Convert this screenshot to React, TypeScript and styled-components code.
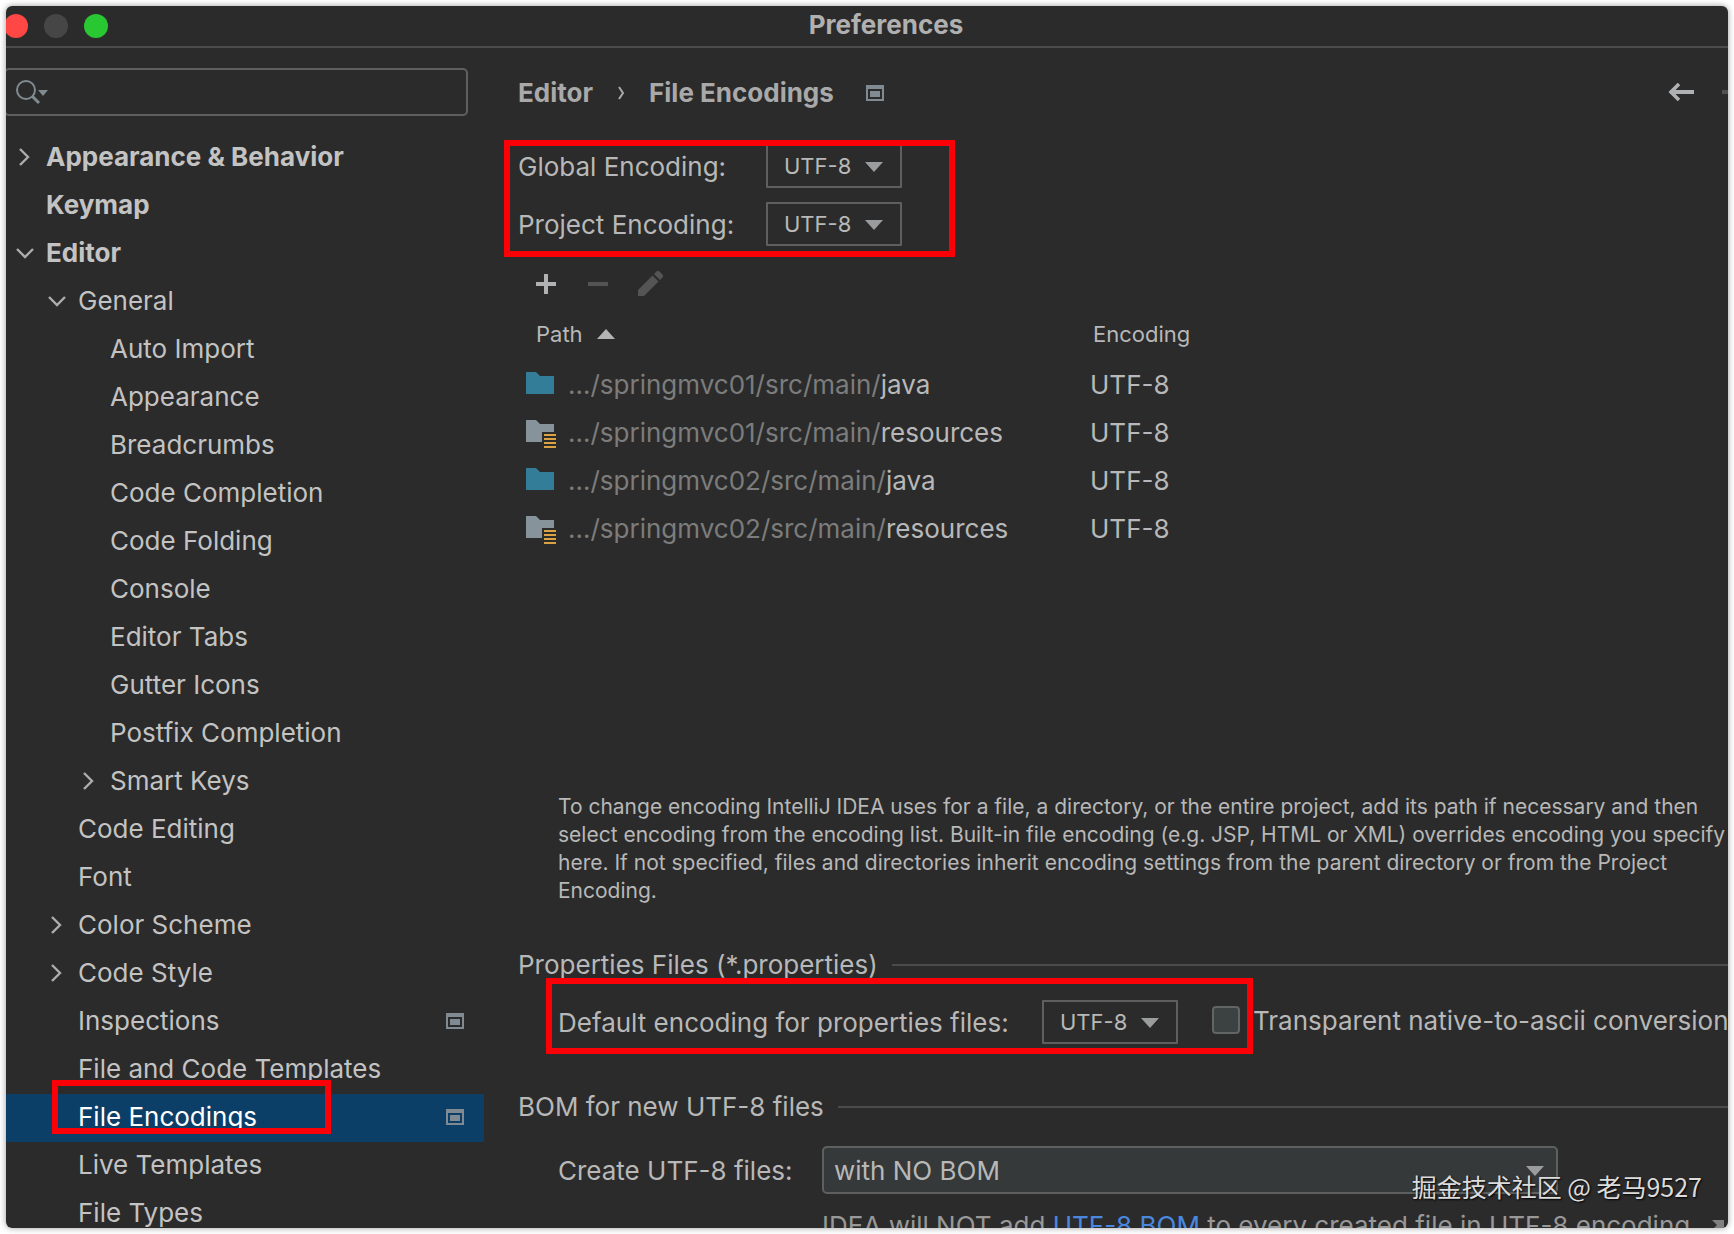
import React, { useState } from "react";
import styled, { createGlobalStyle, css } from "styled-components";

const color = {
  panel: "#2b2b2b",
  line: "#4b4b4b",
  border: "#5e6060",
  text: "#b8b8b8",
  tree: "#c3c3c3",
  muted: "#7c7c7c",
  disabled: "#545454",
  icon: "#afb1b3",
  selection: "#0b3f68",
  link: "#4a88e0",
  mark: "#fb0007",
};

const size = { body: 26, small: 22, help: 21 };

const GlobalStyle = createGlobalStyle`
  * { box-sizing: border-box; }
  body {
    margin: 0;
    background: #fff;
    color: ${color.text};
    font-family: Inter, "Liberation Sans", "Noto Sans CJK SC", sans-serif;
    font-size: ${size.body}px;
    line-height: 32px;
  }
  button, input, select { font: inherit; color: inherit; margin: 0; }
`;

const Backdrop = styled.div`
  height: 100vh;
  padding: 6px;
`;

const Window = styled.main`
  position: relative;
  display: flex;
  flex-direction: column;
  height: 100%;
  overflow: hidden;
  border-radius: 6px;
  background: ${color.panel};
`;

const Shadow = styled.div`
  height: 100%;
  border-radius: 6px;
  box-shadow: 0 0 6px rgba(0, 0, 0, 0.4);
`;

const TitleBar = styled.header`
  display: grid;
  grid-template-columns: 1fr auto 1fr;
  align-items: center;
  flex: none;
  height: 42px;
  border-bottom: 2px solid ${color.line};
`;

const Lights = styled.div`
  display: flex;
  gap: 16px;
  margin-left: -2px;
`;

const Light = styled.button<{ $fill: string }>`
  width: 24px;
  height: 24px;
  padding: 0;
  border: 0;
  border-radius: 50%;
  background: ${(p) => p.$fill};
`;

const WindowTitle = styled.h1`
  margin: 0;
  padding: 0 0 2px 38px;
  font-size: ${size.body}px;
  font-weight: 700;
  color: #b0b0b0;
`;

const Body = styled.div`
  display: grid;
  grid-template-columns: 478px minmax(0, 1fr);
  flex: 1;
  min-height: 0;
`;

const Sidebar = styled.aside`
  min-height: 0;
  padding-top: 20px;
`;

const SearchBox = styled.label`
  display: flex;
  align-items: center;
  height: 48px;
  margin: 0 16px 18px -2px;
  padding-left: 9px;
  border: 2px solid ${color.border};
  border-radius: 5px;
`;

const SearchInput = styled.input`
  flex: 1;
  min-width: 0;
  height: 40px;
  padding: 0 8px;
  border: 0;
  outline: 0;
  background: transparent;
`;

const TreeList = styled.ul`
  margin: 0;
  padding: 0;
  list-style: none;
`;

const TreeItem = styled.li`
  position: relative;
`;

const TreeRow = styled.button<{ $level: number; $selected: boolean }>`
  display: flex;
  align-items: center;
  gap: 9px;
  width: 100%;
  height: 48px;
  padding: 0 20px 3px ${(p) => 7 + p.$level * 32}px;
  border: 0;
  background: transparent;
  color: ${color.tree};
  text-align: left;
  white-space: nowrap;
  ${(p) =>
    p.$selected &&
    css`
      background: ${color.selection};
      color: #fff;
    `}
`;

const Slot = styled.span`
  display: flex;
  justify-content: center;
  flex: none;
  width: 24px;
`;

const TreeLabel = styled.span<{ $bold: boolean }>`
  flex: 1;
  font-weight: ${(p) => (p.$bold ? 700 : 400)};
`;

const Mark = styled.span<{ $top: number; $right: number; $bottom: number; $left: number }>`
  position: absolute;
  top: ${(p) => p.$top}px;
  right: ${(p) => p.$right}px;
  bottom: ${(p) => p.$bottom}px;
  left: ${(p) => p.$left}px;
  z-index: 1;
  border: 6px solid ${color.mark};
  pointer-events: none;
`;

const Content = styled.section`
  min-width: 0;
  padding-left: 34px;
  overflow: hidden;
  white-space: nowrap;
`;

const TopRow = styled.div`
  display: flex;
  align-items: center;
  height: 90px;
`;

const Crumbs = styled.nav`
  display: flex;
  align-items: center;
  gap: 24px;
  flex: 1;
  font-weight: 700;
  color: #a9a9a9;
`;

const ProjectMark = styled.span`
  display: flex;
  margin-left: 8px;
`;

const History = styled.div`
  display: flex;
  gap: 28px;
  margin-right: -20px;
`;

const IconButton = styled.button`
  display: flex;
  padding: 0;
  border: 0;
  background: transparent;
`;

const Encodings = styled.div`
  position: relative;
  display: grid;
  grid-template-columns: 248px 136px;
  row-gap: 14px;
  align-items: center;
  width: max-content;
  margin-top: 6px;
`;

const FieldLabel = styled.label`
  padding-top: 2px;
`;

const SelectWrap = styled.div<{ $wide?: boolean }>`
  position: relative;
  width: ${(p) => (p.$wide ? 736 : 136)}px;
  height: ${(p) => (p.$wide ? 48 : 44)}px;
`;

const Select = styled.select<{ $wide?: boolean }>`
  appearance: none;
  width: 100%;
  height: 100%;
  padding: ${(p) => (p.$wide ? "2px 10px 0" : "0 16px")};
  border: 2px solid ${color.border};
  border-radius: ${(p) => (p.$wide ? 5 : 1)}px;
  outline: 0;
  background: ${(p) => (p.$wide ? "#353939" : "transparent")};
  font-size: ${(p) => (p.$wide ? size.body : size.small)}px;
`;

const SelectArrow = styled.span<{ $wide?: boolean }>`
  position: absolute;
  top: 2px;
  bottom: 0;
  right: ${(p) => (p.$wide ? 14 : 19)}px;
  display: flex;
  align-items: center;
  pointer-events: none;
`;

const Toolbar = styled.div`
  display: flex;
  align-items: center;
  gap: 26px;
  height: 52px;
  margin-top: 12px;
  padding-left: 15px;
`;

const TablePanel = styled.div`
  min-height: 483px;
`;

const Table = styled.table`
  width: 100%;
  border-collapse: collapse;
  table-layout: fixed;
`;

const PathColumn = styled.col`
  width: 572px;
`;

const HeadCell = styled.th<{ $inset: number }>`
  height: 50px;
  padding: 0 0 2px ${(p) => p.$inset}px;
  font-size: ${size.small}px;
  font-weight: 400;
  text-align: left;
`;

const HeadInner = styled.span`
  display: flex;
  align-items: center;
  gap: 14px;
`;

const Cell = styled.td`
  height: 48px;
  padding: 2px 0 0;
`;

const PathInner = styled.span`
  display: flex;
  align-items: center;
  gap: 10px;
  padding-left: 8px;
`;

const Muted = styled.span`
  color: ${color.muted};
`;

const Help = styled.p`
  margin: 0;
  padding-left: 40px;
  font-size: ${size.help}px;
  line-height: 28px;
`;

const SectionTitle = styled.h2<{ $space: number }>`
  display: flex;
  align-items: center;
  gap: 14px;
  height: 32px;
  margin: ${(p) => p.$space}px 0 0;
  font-size: ${size.body}px;
  font-weight: 400;

  &::after {
    content: "";
    flex: 1;
    height: 2px;
    background: ${color.line};
  }
`;

const PropertiesRow = styled.div`
  display: flex;
  align-items: center;
  margin-top: 19px;
  padding-left: 40px;
`;

const MarkedFields = styled.div`
  position: relative;
  display: grid;
  grid-template-columns: 484px 136px 34px 28px;
  align-items: center;
`;

const Checkbox = styled.input`
  appearance: none;
  grid-column: 4;
  width: 28px;
  height: 28px;
  border: 2px solid #616566;
  border-radius: 4px;
  background: #3c4142;

  && {
    margin-bottom: 4px;
  }
`;

const CheckLabel = styled.label`
  padding: 0 0 2px 13px;
`;

const BomGrid = styled.div`
  display: grid;
  grid-template-columns: 264px max-content;
  row-gap: 16px;
  align-items: center;
  margin-top: 23px;
  padding-left: 40px;
`;

const Hint = styled.p`
  grid-column: 2;
  display: flex;
  align-items: center;
  gap: 18px;
  margin: 0;
  color: #989898;
`;

const Link = styled.a`
  color: ${color.link};
  text-decoration: none;
`;

const Watermark = styled.div`
  position: absolute;
  right: 26px;
  bottom: 26px;
  z-index: 2;
  color: #dcdcdc;
  font-family: "Noto Sans CJK SC", sans-serif;
  font-size: 25px;
  text-shadow: 1px 1px 2px #000;
`;

const Triangle = ({ up = false, fill = "#9a9c9d" }: { up?: boolean; fill?: string }) => (
  <svg width="18" height="10" viewBox="0 0 18 10" aria-hidden="true">
    <path d={up ? "M0 10h18L9 0z" : "M0 0h18L9 10z"} fill={fill} />
  </svg>
);

const Chevron = ({ open }: { open: boolean }) => (
  <svg width="18" height="18" viewBox="0 0 18 18" fill="none" stroke="#adadad" strokeWidth="2.4" aria-hidden="true">
    <path d={open ? "M1 5l8 8 8-8" : "M4 1l8 8-8 8"} />
  </svg>
);

const ProjectIcon = () => (
  <svg width="18" height="16" viewBox="0 0 18 16" fill="#808a92" aria-hidden="true">
    <path fillRule="evenodd" d="M0 0h18v16H0zM2 4v10h14V4z" />
    <path d="M4 6h10v6H4z" />
  </svg>
);

const SearchIcon = () => (
  <svg width="34" height="26" viewBox="0 0 34 26" fill="none" stroke="#7f8b91" strokeWidth="2" aria-hidden="true">
    <circle cx="11" cy="11" r="9" />
    <path d="M17 17l7 7" strokeWidth="3" />
    <path d="M23 11h10l-5 6z" fill="#7f8b91" stroke="none" />
  </svg>
);

const Arrow = ({ forward = false }: { forward?: boolean }) => (
  <svg width="26" height="20" viewBox="0 0 26 20" fill="none" stroke={forward ? "#515151" : "#afb1b3"} aria-hidden="true">
    <path d={forward ? "M0 9h24" : "M2 9h24"} strokeWidth="4" />
    <path d={forward ? "M15 1l8 8-8 8" : "M11 1l-8 8 8 8"} strokeWidth="3.6" />
  </svg>
);

const Folder = ({ kind }: { kind: "source" | "resource" }) => (
  <svg width="32" height="30" viewBox="0 0 32 30" aria-hidden="true">
    {kind === "source" ? (
      <path d="M0 2h10l4 4h14v18H0z" fill="#347d99" />
    ) : (
      <>
        <path d="M0 2h10l4 4h14v8H16v10H0z" fill="#87939a" />
        <path d="M18 16h12v2H18zM18 20h12v2H18zM18 24h12v2H18zM18 28h12v2H18z" fill="#d9a343" />
      </>
    )}
  </svg>
);

type Node = { label: string; level: number; open?: boolean; bold?: boolean; project?: boolean };

const nodes: Node[] = [
  { label: "Appearance & Behavior", level: 0, open: false, bold: true },
  { label: "Keymap", level: 0, bold: true },
  { label: "Editor", level: 0, open: true, bold: true },
  { label: "General", level: 1, open: true },
  { label: "Auto Import", level: 2 },
  { label: "Appearance", level: 2 },
  { label: "Breadcrumbs", level: 2 },
  { label: "Code Completion", level: 2 },
  { label: "Code Folding", level: 2 },
  { label: "Console", level: 2 },
  { label: "Editor Tabs", level: 2 },
  { label: "Gutter Icons", level: 2 },
  { label: "Postfix Completion", level: 2 },
  { label: "Smart Keys", level: 2, open: false },
  { label: "Code Editing", level: 1 },
  { label: "Font", level: 1 },
  { label: "Color Scheme", level: 1, open: false },
  { label: "Code Style", level: 1, open: false },
  { label: "Inspections", level: 1, project: true },
  { label: "File and Code Templates", level: 1 },
  { label: "File Encodings", level: 1, project: true },
  { label: "Live Templates", level: 1 },
  { label: "File Types", level: 1 },
];

const paths: { base: string; name: string; kind: "source" | "resource" }[] = [
  { base: "…/springmvc01/src/main/", name: "java", kind: "source" },
  { base: "…/springmvc01/src/main/", name: "resources", kind: "resource" },
  { base: "…/springmvc02/src/main/", name: "java", kind: "source" },
  { base: "…/springmvc02/src/main/", name: "resources", kind: "resource" },
];

function Dropdown({ id, value, wide }: { id: string; value: string; wide?: boolean }) {
  return (
    <SelectWrap $wide={wide}>
      <Select id={id} $wide={wide} defaultValue={value}>
        <option>{value}</option>
      </Select>
      <SelectArrow $wide={wide}>
        <Triangle />
      </SelectArrow>
    </SelectWrap>
  );
}

function SettingsTree() {
  const [selected, setSelected] = useState("File Encodings");
  return (
    <TreeList>
      {nodes.map((node, index) => (
        <TreeItem key={index}>
          <TreeRow
            $level={node.level}
            $selected={node.label === selected}
            aria-expanded={node.open}
            onClick={() => setSelected(node.label)}
          >
            <Slot>{node.open !== undefined && <Chevron open={node.open} />}</Slot>
            <TreeLabel $bold={!!node.bold}>{node.label}</TreeLabel>
            {node.project && <ProjectIcon />}
          </TreeRow>
          {node.label === "File Encodings" && <Mark $top={-14} $right={153} $bottom={8} $left={46} />}
        </TreeItem>
      ))}
    </TreeList>
  );
}

export default function App() {
  return (
    <Backdrop>
      <GlobalStyle />
      <Shadow>
        <Window>
          <TitleBar>
            <Lights>
              <Light $fill="#ff4845" aria-label="Close" />
              <Light $fill="#464646" aria-label="Minimize" />
              <Light $fill="#29c732" aria-label="Zoom" />
            </Lights>
            <WindowTitle>Preferences</WindowTitle>
          </TitleBar>
          <Body>
            <Sidebar>
              <SearchBox>
                <SearchIcon />
                <SearchInput type="text" aria-label="Search settings" />
              </SearchBox>
              <SettingsTree />
            </Sidebar>
            <Content>
              <TopRow>
                <Crumbs>
                  <span>Editor</span>
                  <svg width="8" height="14" viewBox="0 0 8 14" fill="none" stroke="#a9a9a9" strokeWidth="2" aria-hidden="true">
                    <path d="M2 1l4 6-4 6" />
                  </svg>
                  <span>File Encodings</span>
                  <ProjectMark>
                    <ProjectIcon />
                  </ProjectMark>
                </Crumbs>
                <History>
                  <IconButton aria-label="Back">
                    <Arrow />
                  </IconButton>
                  <IconButton aria-label="Forward" disabled>
                    <Arrow forward />
                  </IconButton>
                </History>
              </TopRow>
              <Encodings>
                <FieldLabel htmlFor="global">Global Encoding:</FieldLabel>
                <Dropdown id="global" value="UTF-8" />
                <FieldLabel htmlFor="project">Project Encoding:</FieldLabel>
                <Dropdown id="project" value="UTF-8" />
                <Mark $top={-4} $right={-53} $bottom={-11} $left={-14} />
              </Encodings>
              <Toolbar>
                <IconButton aria-label="Add">
                  <svg width="26" height="28" viewBox="0 0 26 28" stroke={color.icon} strokeWidth="4" aria-hidden="true">
                    <path d="M3 14h20M13 4v20" />
                  </svg>
                </IconButton>
                <IconButton aria-label="Remove" disabled>
                  <svg width="26" height="28" viewBox="0 0 26 28" stroke={color.disabled} strokeWidth="4" aria-hidden="true">
                    <path d="M3 14h20" />
                  </svg>
                </IconButton>
                <IconButton aria-label="Edit" disabled>
                  <svg width="28" height="28" viewBox="0 0 28 28" fill={color.disabled} aria-hidden="true">
                    <path d="M1 20L15.500 5.500l6 6L7 26H1zM17 4l2.700-2.700q1.300-1 2.600 0l3.400 3.400q1 1.300 0 2.600L23 10z" />
                  </svg>
                </IconButton>
              </Toolbar>
              <TablePanel>
                <Table>
                  <colgroup>
                    <PathColumn />
                    <col />
                  </colgroup>
                  <thead>
                    <tr>
                      <HeadCell $inset={18}>
                        <HeadInner>
                          Path <Triangle up fill="#b4b4b4" />
                        </HeadInner>
                      </HeadCell>
                      <HeadCell $inset={3}>Encoding</HeadCell>
                    </tr>
                  </thead>
                  <tbody>
                    {paths.map((row, index) => (
                      <tr key={index}>
                        <Cell>
                          <PathInner>
                            <Folder kind={row.kind} />
                            <span>
                              <Muted>{row.base}</Muted>
                              {row.name}
                            </span>
                          </PathInner>
                        </Cell>
                        <Cell>UTF-8</Cell>
                      </tr>
                    ))}
                  </tbody>
                </Table>
              </TablePanel>
              <Help>
                To change encoding IntelliJ IDEA uses for a file, a directory, or the entire project, add its path if necessary and then
                <br />
                select encoding from the encoding list. Built-in file encoding (e.g. JSP, HTML or XML) overrides encoding you specify
                <br />
                here. If not specified, files and directories inherit encoding settings from the parent directory or from the Project
                <br />
                Encoding.
              </Help>
              <SectionTitle $space={44}>Properties Files (*.properties)</SectionTitle>
              <PropertiesRow>
                <MarkedFields>
                  <FieldLabel htmlFor="properties">Default encoding for properties files:</FieldLabel>
                  <Dropdown id="properties" value="UTF-8" />
                  <Checkbox type="checkbox" id="ascii" />
                  <Mark $top={-22} $right={-13} $bottom={-10} $left={-12} />
                </MarkedFields>
                <CheckLabel htmlFor="ascii">Transparent native-to-ascii conversion</CheckLabel>
              </PropertiesRow>
              <SectionTitle $space={47}>BOM for new UTF-8 files</SectionTitle>
              <BomGrid>
                <FieldLabel htmlFor="bom">Create UTF-8 files:</FieldLabel>
                <Dropdown id="bom" value="with NO BOM" wide />
                <Hint>
                  <span>
                    IDEA will NOT add <Link href="#bom">UTF-8 BOM</Link> to every created file in UTF-8 encoding
                  </span>
                  <svg width="18" height="18" viewBox="0 0 18 18" fill="#808080" aria-hidden="true">
                    <path d="M4 3h12v12l-4-4-7 7-3-3 7-7z" />
                  </svg>
                </Hint>
              </BomGrid>
            </Content>
          </Body>
          <Watermark>掘金技术社区 @ 老马9527</Watermark>
        </Window>
      </Shadow>
    </Backdrop>
  );
}
